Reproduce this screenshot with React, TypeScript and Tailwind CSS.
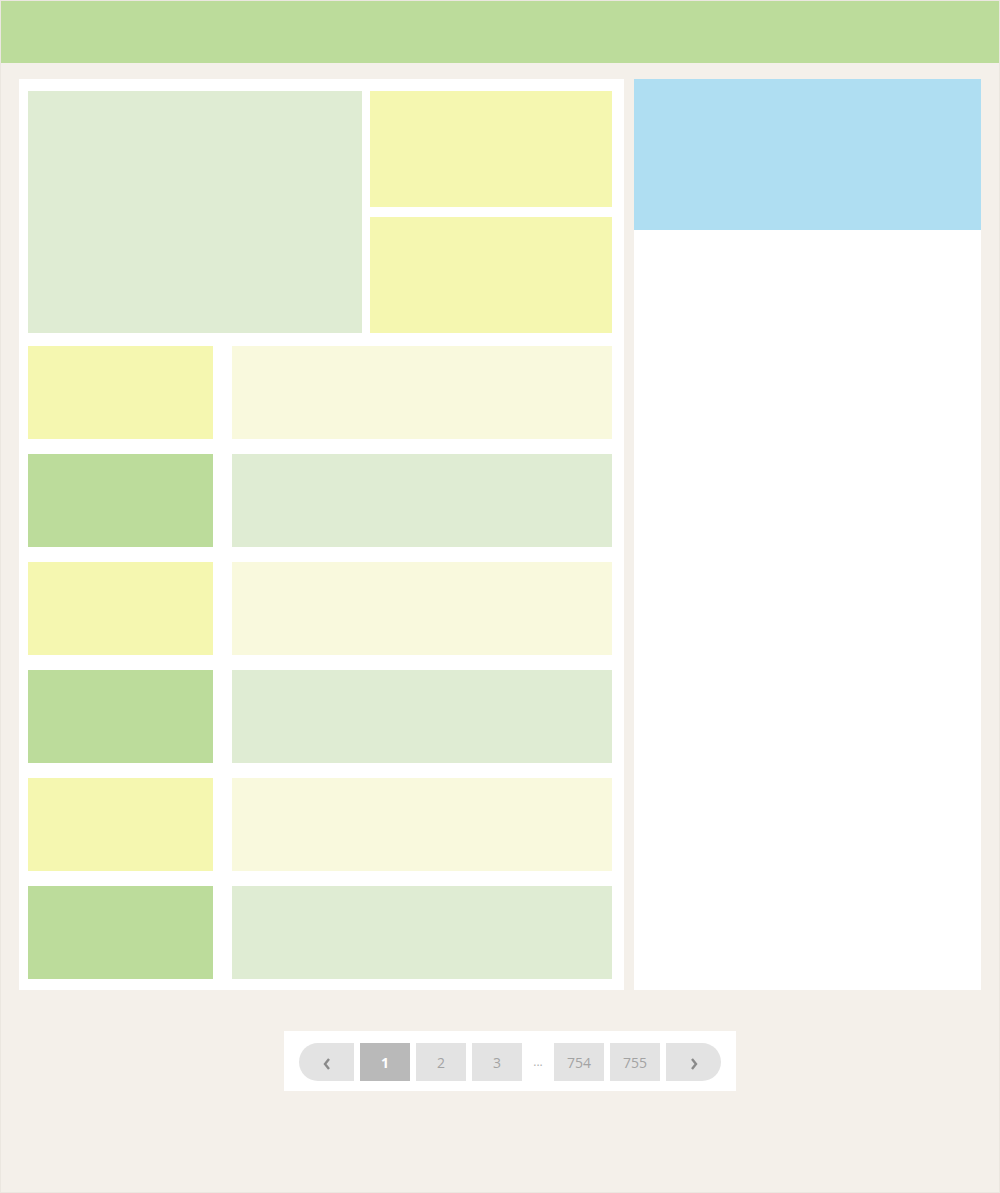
const rows = [
  { a: "bg-[#f5f7b0]", b: "bg-[#f9f9dd]" },
  { a: "bg-[#bcdc9b]", b: "bg-[#dfecd3]" },
  { a: "bg-[#f5f7b0]", b: "bg-[#f9f9dd]" },
  { a: "bg-[#bcdc9b]", b: "bg-[#dfecd3]" },
  { a: "bg-[#f5f7b0]", b: "bg-[#f9f9dd]" },
  { a: "bg-[#bcdc9b]", b: "bg-[#dfecd3]" },
];

function Chevron({ dir }: { dir: "left" | "right" }) {
  return (
    <svg width="10" height="14" viewBox="0 0 10 14" className="mt-[4px]">
      <path
        d={dir === "left" ? "M7 2 L3 7 L7 12" : "M3 2 L7 7 L3 12"}
        fill="none"
        stroke="#8a8a8a"
        strokeWidth="2.4"
      />
    </svg>
  );
}

export default function App() {
  const page = "flex h-[38px] w-[50px] items-center justify-center bg-[#e3e3e3] text-[14px] text-[#a3a3a3]";
  return (
    <div
      className="min-h-[1193px] border border-[#ebe7e0] bg-[#f4f0ea]"
      style={{ fontFamily: '"Open Sans", "Liberation Sans", sans-serif' }}
    >
      <header className="h-[62px] bg-[#bcdc9b]" />

      <div className="mt-[16px] flex gap-[10px] pl-[18px] pr-[18px]">
        <main className="w-[605px] bg-white pb-[11px] pl-[9px] pr-[12px] pt-[12px]">
          <div className="flex gap-[8px]">
            <div className="h-[242px] w-[334px] bg-[#dfecd3]" />
            <div className="flex flex-1 flex-col gap-[10px]">
              <div className="h-[116px] bg-[#f5f7b0]" />
              <div className="h-[116px] bg-[#f5f7b0]" />
            </div>
          </div>
          <div className="mt-[13px] flex flex-col gap-[15px]">
            {rows.map((r, i) => (
              <div key={i} className="flex gap-[19px]">
                <div className={`h-[93px] w-[185px] ${r.a}`} />
                <div className={`h-[93px] flex-1 ${r.b}`} />
              </div>
            ))}
          </div>
        </main>

        <aside className="flex-1 bg-white">
          <div className="h-[151px] bg-[#afdef2]" />
        </aside>
      </div>

      <div className="mt-[41px] flex justify-center pl-[20px]">
        <nav className="flex items-center gap-[6px] bg-white pb-[10px] pl-[15px] pr-[15px] pt-[12px]">
          <button className="flex h-[38px] w-[55px] items-center justify-center rounded-l-full bg-[#e3e3e3]">
            <Chevron dir="left" />
          </button>
          <span className="flex h-[38px] w-[50px] items-center justify-center bg-[#b9b9b9] text-[14px] font-bold text-white">1</span>
          <span className={page}>2</span>
          <span className={page}>3</span>
          <span className="flex h-[38px] w-[20px] items-center justify-center text-[12px] text-[#b0b0b0]">...</span>
          <span className={page}>754</span>
          <span className={page}>755</span>
          <button className="flex h-[38px] w-[55px] items-center justify-center rounded-r-full bg-[#e3e3e3]">
            <Chevron dir="right" />
          </button>
        </nav>
      </div>
    </div>
  );
}
